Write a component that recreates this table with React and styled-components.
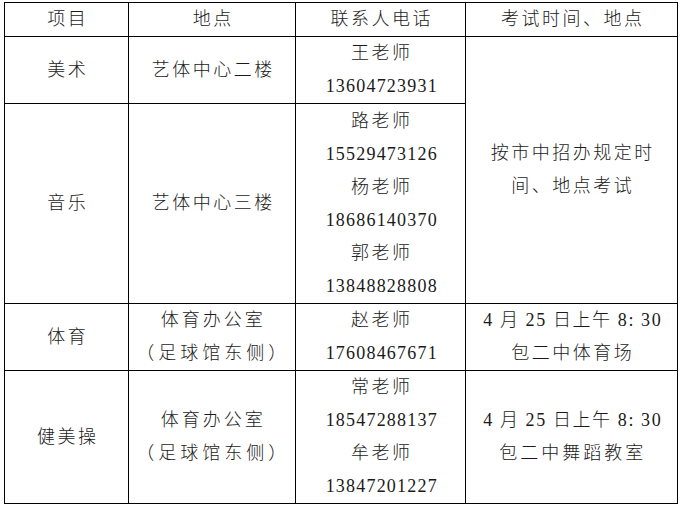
import React from "react";
import styled, { createGlobalStyle } from "styled-components";

const GlobalStyle = createGlobalStyle`
  html, body {
    margin: 0;
    padding: 0;
    background: #fff;
  }
  body {
    padding: 2px 0 0 4px;
  }
`;

const Table = styled.table`
  border-collapse: collapse;
  table-layout: fixed;
  width: 673px;
  font-family: "Liberation Serif", "Noto Sans CJK SC", serif;
  font-size: 18px;
  font-weight: 300;
  color: #1a1a1a;
`;

const Row = styled.tr`
  height: ${(p) => p.$h}px;
`;

const Cell = styled.td`
  border: 1px solid #000;
  padding: 0 0 0 2.5px;
  text-align: center;
  vertical-align: middle;
  letter-spacing: 2.5px;
  line-height: 33px;
`;

const HeadCell = styled(Cell).attrs({ as: "th" })`
  font-weight: 300;
`;

const Line = styled.div`
  height: 33px;
  line-height: 33px;
  white-space: nowrap;
  letter-spacing: ${(p) => p.$spacing ?? 2.5}px;
`;

const Phone = styled(Line)`
  letter-spacing: 1.2px;
`;

function Contacts({ items }) {
  return items.map(([name, phone]) => (
    <React.Fragment key={phone}>
      <Line>{name}</Line>
      <Phone>{phone}</Phone>
    </React.Fragment>
  ));
}

export default function App() {
  return (
    <>
      <GlobalStyle />
      <Table>
        <colgroup>
          <col style={{ width: 124 }} />
          <col style={{ width: 167 }} />
          <col style={{ width: 170 }} />
          <col style={{ width: 212 }} />
        </colgroup>
        <tbody>
          <Row $h={33}>
            <HeadCell>项目</HeadCell>
            <HeadCell>地点</HeadCell>
            <HeadCell>联系人电话</HeadCell>
            <HeadCell>考试时间、地点</HeadCell>
          </Row>
          <Row $h={67}>
            <Cell>美术</Cell>
            <Cell>艺体中心二楼</Cell>
            <Cell>
              <Contacts items={[["王老师", "13604723931"]]} />
            </Cell>
            <Cell rowSpan={2}>
              <Line>按市中招办规定时</Line>
              <Line>间、地点考试</Line>
            </Cell>
          </Row>
          <Row $h={200}>
            <Cell>音乐</Cell>
            <Cell>艺体中心三楼</Cell>
            <Cell>
              <Contacts
                items={[
                  ["路老师", "15529473126"],
                  ["杨老师", "18686140370"],
                  ["郭老师", "13848828808"],
                ]}
              />
            </Cell>
          </Row>
          <Row $h={67}>
            <Cell>体育</Cell>
            <Cell>
              <Line $spacing={3}>体育办公室</Line>
              <Line $spacing={4}>（足球馆东侧）</Line>
            </Cell>
            <Cell>
              <Contacts items={[["赵老师", "17608467671"]]} />
            </Cell>
            <Cell>
              <Line $spacing={1.6}>4 月 25 日上午 8: 30</Line>
              <Line $spacing={2.5}>包二中体育场</Line>
            </Cell>
          </Row>
          <Row $h={133}>
            <Cell>健美操</Cell>
            <Cell>
              <Line $spacing={3}>体育办公室</Line>
              <Line $spacing={4}>（足球馆东侧）</Line>
            </Cell>
            <Cell>
              <Contacts
                items={[
                  ["常老师", "18547288137"],
                  ["牟老师", "13847201227"],
                ]}
              />
            </Cell>
            <Cell>
              <Line $spacing={1.6}>4 月 25 日上午 8: 30</Line>
              <Line $spacing={3}>包二中舞蹈教室</Line>
            </Cell>
          </Row>
        </tbody>
      </Table>
    </>
  );
}
